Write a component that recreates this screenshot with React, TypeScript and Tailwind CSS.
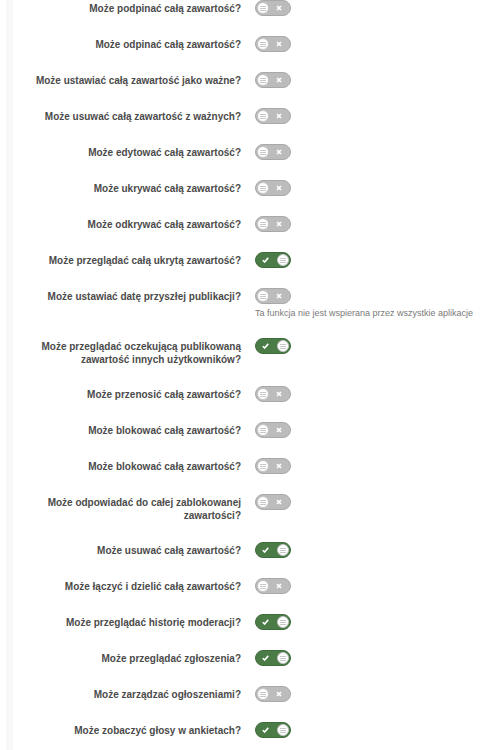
import React from "react";

type Row = { label: string[]; on: boolean; help?: string };

const rows: Row[] = [
  { label: ["Może podpinać całą zawartość?"], on: false },
  { label: ["Może odpinać całą zawartość?"], on: false },
  { label: ["Może ustawiać całą zawartość jako ważne?"], on: false },
  { label: ["Może usuwać całą zawartość z ważnych?"], on: false },
  { label: ["Może edytować całą zawartość?"], on: false },
  { label: ["Może ukrywać całą zawartość?"], on: false },
  { label: ["Może odkrywać całą zawartość?"], on: false },
  { label: ["Może przeglądać całą ukrytą zawartość?"], on: true },
  {
    label: ["Może ustawiać datę przyszłej publikacji?"],
    on: false,
    help: "Ta funkcja nie jest wspierana przez wszystkie aplikacje",
  },
  { label: ["Może przeglądać oczekującą publikowaną", "zawartość innych użytkowników?"], on: true },
  { label: ["Może przenosić całą zawartość?"], on: false },
  { label: ["Może blokować całą zawartość?"], on: false },
  { label: ["Może blokować całą zawartość?"], on: false },
  { label: ["Może odpowiadać do całej zablokowanej", "zawartości?"], on: false },
  { label: ["Może usuwać całą zawartość?"], on: true },
  { label: ["Może łączyć i dzielić całą zawartość?"], on: false },
  { label: ["Może przeglądać historię moderacji?"], on: true },
  { label: ["Może przeglądać zgłoszenia?"], on: true },
  { label: ["Może zarządzać ogłoszeniami?"], on: false },
  { label: ["Może zobaczyć głosy w ankietach?"], on: true },
];

function Knob() {
  return (
    <div className="w-[12px] h-[12px] rounded-full bg-white border border-[#c4c4c4] flex items-center justify-center shrink-0">
      <svg width="6" height="5" viewBox="0 0 6 5">
        <path d="M0 0.5H6M0 2.5H6M0 4.5H6" stroke="#c8c8c8" strokeWidth="1" />
      </svg>
    </div>
  );
}

function Toggle({ on }: { on: boolean }) {
  if (on) {
    return (
      <div className="w-[36px] h-[16px] rounded-full bg-[#4b7c47] border border-[#3f6c3b] flex items-center justify-between pl-[6px] pr-[1px] shrink-0">
        <svg width="7" height="6" viewBox="0 0 7 6">
          <path d="M0.8 3.2L2.6 5L6.2 0.9" stroke="#ffffff" strokeWidth="1.6" fill="none" />
        </svg>
        <Knob />
      </div>
    );
  }
  return (
    <div className="w-[36px] h-[16px] rounded-full bg-[#bcbcbc] border border-[#a9a9a9] flex items-center justify-between pl-[1px] pr-[8px] shrink-0">
      <Knob />
      <svg width="6" height="6" viewBox="0 0 6 6">
        <path d="M1 1L5 5M5 1L1 5" stroke="#ffffff" strokeWidth="1.7" />
      </svg>
    </div>
  );
}

export default function App() {
  return (
    <div
      className="flex min-h-[750px] bg-white"
      style={{ fontFamily: '"Liberation Sans", Arial, sans-serif' }}
    >
      <div className="w-[6px] shrink-0 bg-white" />
      <div className="w-[7px] shrink-0 bg-[#f8f8f8]" />
      <div className="flex-1 flex flex-col -mt-[10px]">
        {rows.map((r, i) => (
          <div key={i} className="flex items-start py-[10px]">
            <div className="w-[228px] shrink-0 text-right text-[10px] font-bold leading-[13px] pt-[2px] text-[#4b4b4b]">
              {r.label.map((l, j) => (
                <div key={j}>{l}</div>
              ))}
            </div>
            <div className="ml-[14px] flex flex-col">
              <Toggle on={r.on} />
              {r.help && (
                <div className="mt-[4px] text-[9px] leading-[10px] text-[#7a7a7a] whitespace-nowrap">
                  {r.help}
                </div>
              )}
            </div>
          </div>
        ))}
      </div>
    </div>
  );
}
